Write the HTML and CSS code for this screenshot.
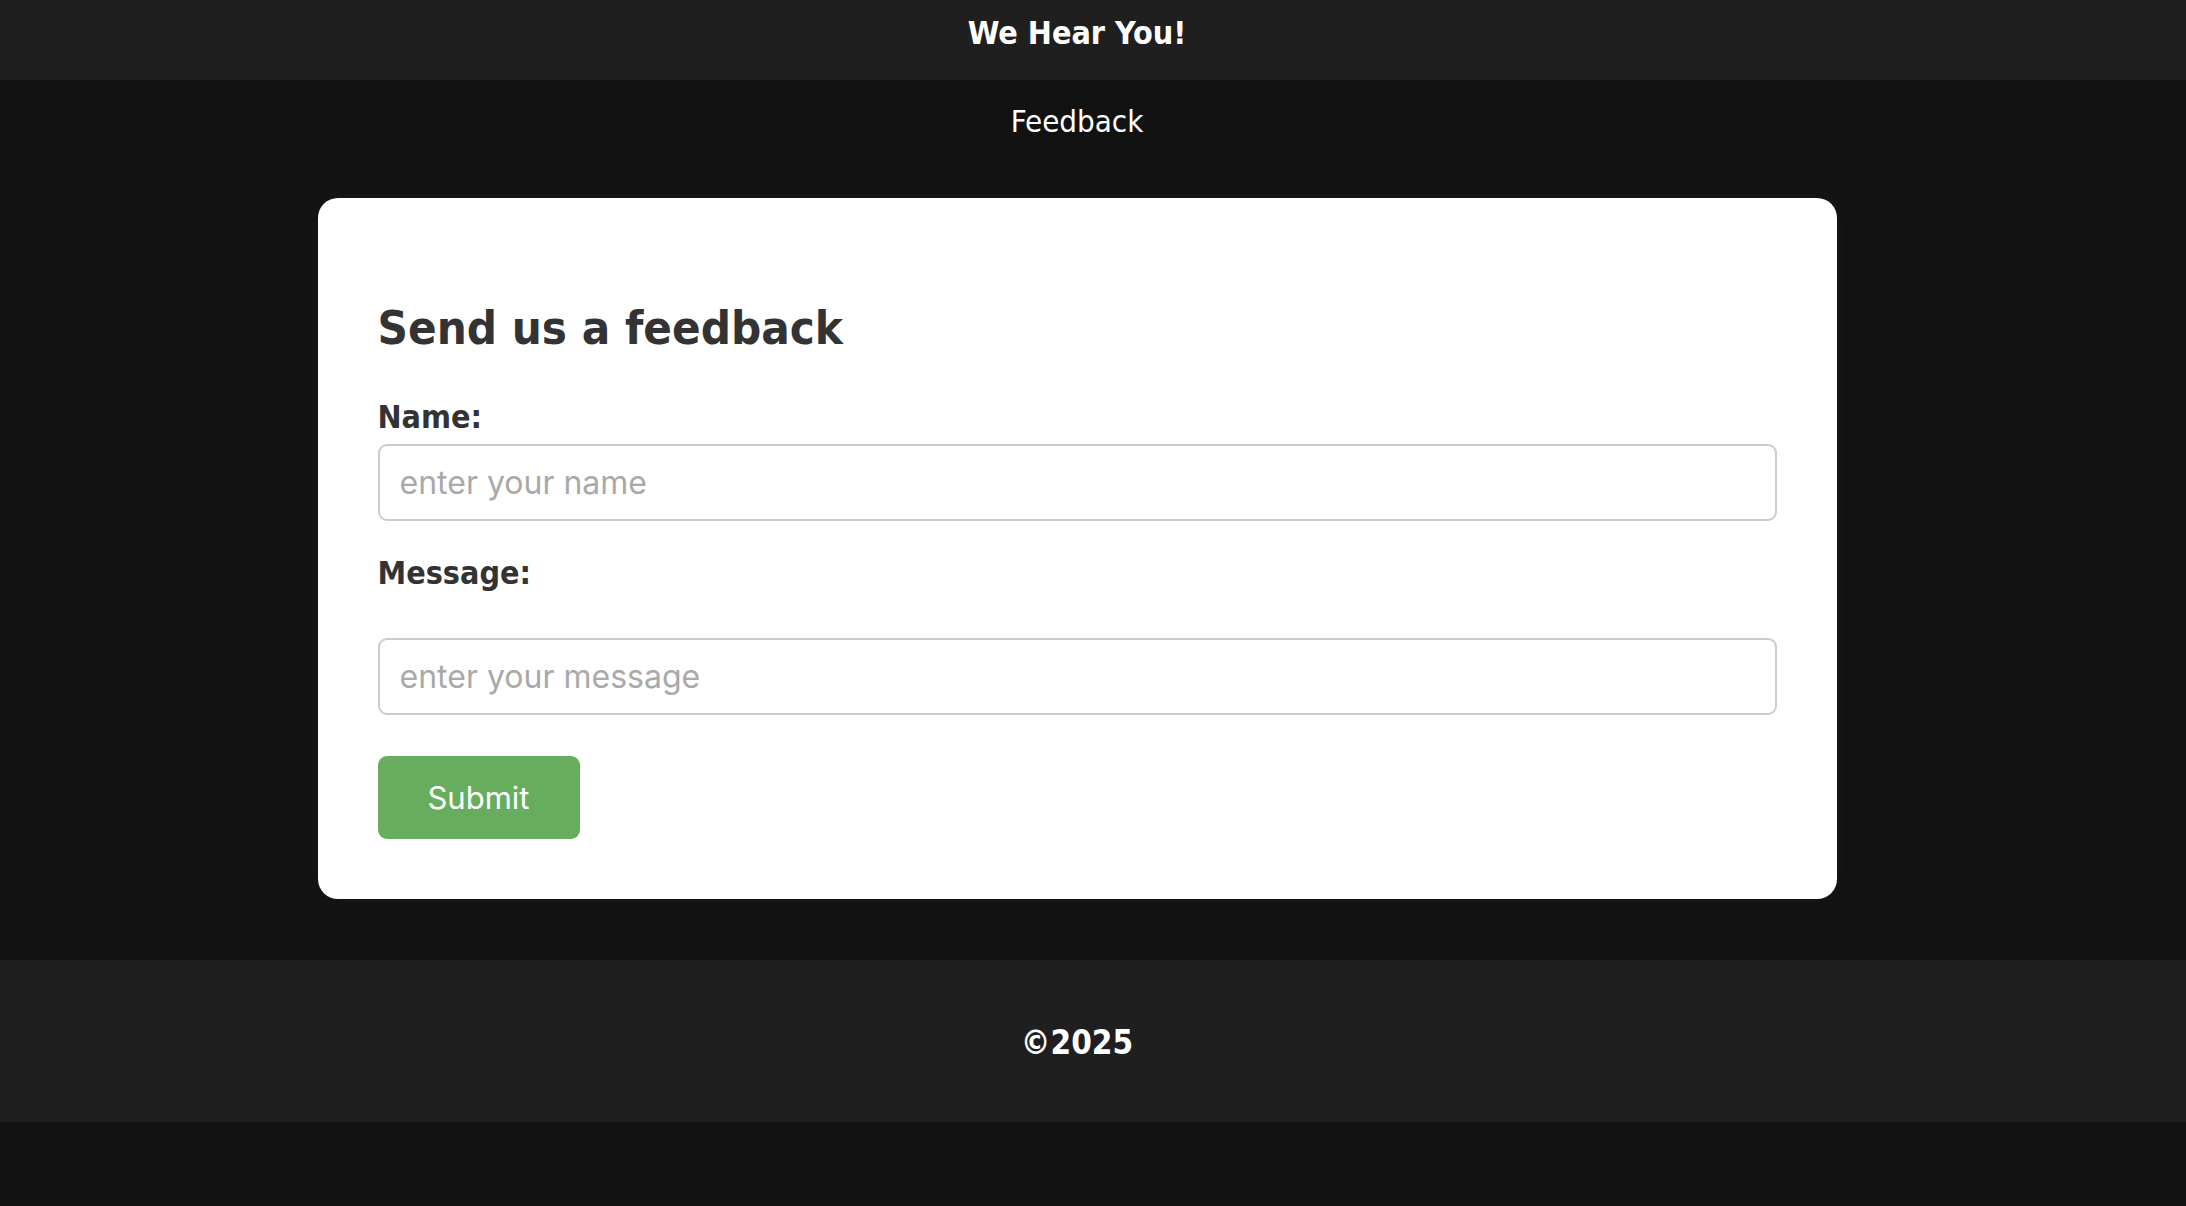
FILE: index.html
```html
<!DOCTYPE html>
<html lang="en">
<head>
<meta charset="utf-8">
<title>We Hear You!</title>
<link rel="stylesheet" href="styles.css">
</head>
<body>
<header class="site-header">
  <h1 class="site-title">We Hear You!</h1>
</header>
<nav class="site-nav">
  <span class="nav-link">Feedback</span>
</nav>
<main class="main">
  <form class="card">
    <h2 class="card-title">Send us a feedback</h2>
    <label class="field-label label-name" for="name">Name:</label>
    <input class="field-input" id="name" type="text" placeholder="enter your name">
    <label class="field-label label-message" for="message">Message:</label>
    <input class="field-input" id="message" type="text" placeholder="enter your message">
    <button class="submit-btn" type="button">Submit</button>
  </form>
</main>
<footer class="site-footer">
  <p class="footer-text">©2025</p>
</footer>
</body>
</html>
```
FILE: styles.css
```css
* { box-sizing: border-box; }
html, body {
  margin: 0;
  padding: 0;
  background: #121212;
  font-family: "DejaVu Sans Condensed", "DejaVu Sans", sans-serif;
}
body { min-height: 1206px; }

.site-header {
  background: #1f1f1f;
  height: 80px;
  padding-top: 17px;
  padding-right: 32px;
}
.site-title {
  margin: 0;
  text-align: center;
  color: #fff;
  font-size: 32px;
  line-height: 32px;
  font-weight: bold;
}

.site-nav {
  padding-top: 25px;
  padding-right: 32px;
  text-align: center;
  height: 118px;
}
.nav-link {
  color: #fff;
  font-size: 31px;
  line-height: 32px;
  display: inline-block;
}

.main {
  padding-right: 32px;
}
.card {
  width: 1519px;
  margin: 0 auto;
  background: #fff;
  border-radius: 20px;
  padding: 60px;
  display: flex;
  flex-direction: column;
  align-items: flex-start;
  box-shadow: 0 0 24px rgba(255, 255, 255, 0.03);
}
.card-title {
  margin: 42px 0 0;
  color: #333;
  font-size: 47px;
  line-height: 56px;
  font-weight: bold;
}
.field-label {
  display: block;
  color: #333;
  font-size: 32px;
  line-height: 38px;
  font-weight: bold;
}
.label-name { margin-top: 42px; }
.label-message { margin-top: 33px; }

.field-input {
  display: block;
  width: 100%;
  height: 77px;
  border: 2px solid #cccccc;
  border-radius: 9px;
  padding: 0 20px;
  font-family: "Inter", "Roboto", sans-serif;
  font-size: 32px;
  color: #333;
  background: #fff;
  outline: none;
}
.field-input::placeholder { color: #a9a9a9; }
#name { margin-top: 8px; }
#message { margin-top: 46px; }

.submit-btn {
  margin-top: 41px;
  width: 202px;
  height: 83px;
  border: none;
  border-radius: 9px;
  background: #67ad5e;
  color: #fff;
  font-family: "Inter", "Roboto", sans-serif;
  font-size: 31px;
  padding: 0;
}

.site-footer {
  margin-top: 61px;
  background: #1f1f1f;
  height: 162px;
  padding-top: 67px;
  padding-right: 32px;
}
.footer-text {
  margin: 0;
  text-align: center;
  color: #fff;
  font-size: 33px;
  line-height: 32px;
  font-weight: bold;
}
```
